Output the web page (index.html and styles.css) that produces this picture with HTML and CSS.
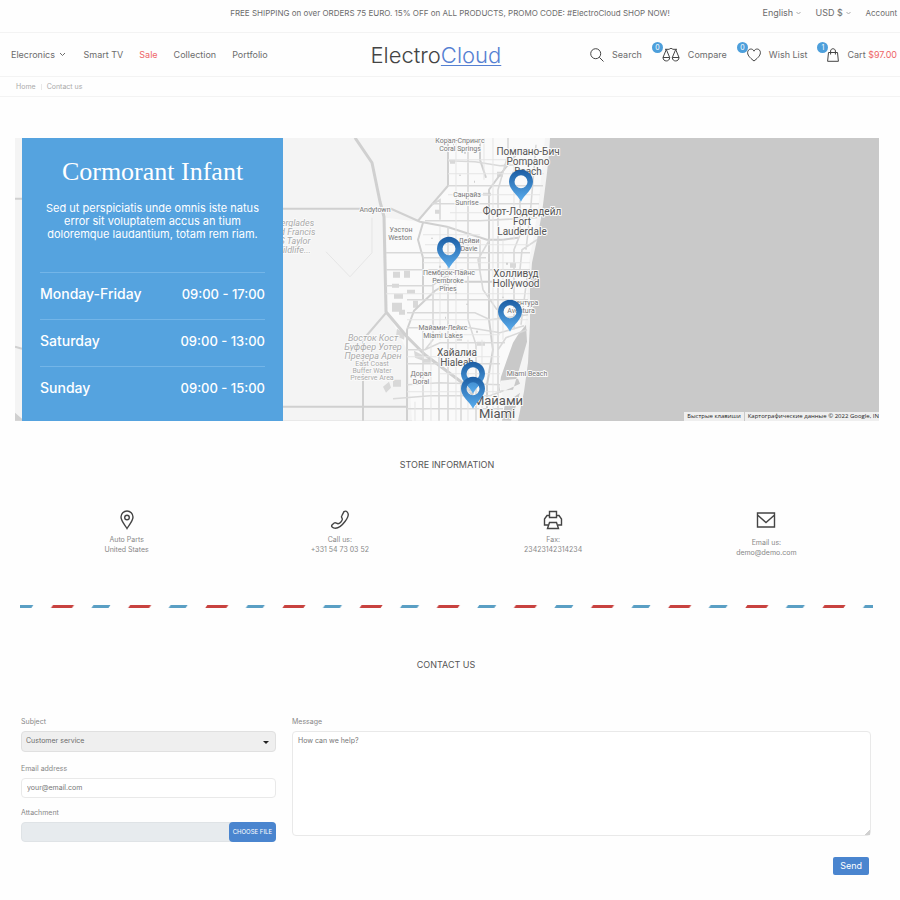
FILE: index.html
```html
<!DOCTYPE html>
<html lang="en">
<head>
<meta charset="utf-8">
<meta name="viewport" content="width=device-width, initial-scale=1">
<title>Contact us - ElectroCloud</title>
<link rel="stylesheet" href="styles.css">
</head>
<body>
<div class="topbar">
  <p class="promo">FREE SHIPPING on over ORDERS 75 EURO. 15% OFF on ALL PRODUCTS, PROMO CODE: #ElectroCloud SHOP NOW!</p>
  <div class="prefs">
    <span class="pref"><select aria-label="Language"><option>English</option></select><svg width="5" height="4" viewBox="0 0 5 4"><path d="M.5 1l2 2 2-2"/></svg></span>
    <span class="pref"><select aria-label="Currency"><option>USD $</option></select><svg width="5" height="4" viewBox="0 0 5 4"><path d="M.5 1l2 2 2-2"/></svg></span>
    <a class="account" href="#">Account</a>
  </div>
</div>

<header class="header">
  <nav class="nav">
    <a href="#">Elecronics <svg width="7" height="5" viewBox="0 0 7 5"><path d="M1 1l2.500 2.500L6 1"/></svg></a>
    <a href="#">Smart TV</a>
    <a class="sale" href="#">Sale</a>
    <a href="#">Collection</a>
    <a href="#">Portfolio</a>
  </nav>
  <a class="logo" href="#">Electro<span>Cloud</span></a>
  <div class="tools">
    <a class="tool" href="#"><span class="icon"><svg width="14" height="14" viewBox="0 0 14 14"><circle cx="5.700" cy="5.700" r="5"/><path d="M9.300 9.300L13.500 13.500"/></svg></span>Search</a>
    <a class="tool" href="#"><span class="icon"><svg width="18" height="14" viewBox="0 0 18 14"><path d="M3 1.300h4.200C8 0 10 0 10.800 1.300H15M4.300 1.500L1 9.500h6.700zM13.700 1.500L10.300 9.500H17zM1 9.500c0 4.600 6.700 4.600 6.700 0M10.300 9.500c0 4.600 6.700 4.600 6.700 0"/></svg><b class="badge">0</b></span>Compare</a>
    <a class="tool" href="#"><span class="icon"><svg width="14" height="14" viewBox="0 0 14 14"><path d="M7 13C4.500 11 .6 8 .6 4.700.6.500 5.700-.2 7 3.200 8.300-.2 13.400.500 13.400 4.700 13.400 8 9.500 11 7 13z"/></svg><b class="badge">0</b></span>Wish List</a>
    <a class="tool" href="#"><span class="icon"><svg width="12" height="14" viewBox="0 0 12 14"><path d="M1.500 4.500h9L11.400 13.300H.6zM3.600 6.500V3c0-3 4.800-3 4.800 0v3.500"/></svg><b class="badge">1</b></span><span>Cart <span class="price">$97.00</span></span></a>
  </div>
</header>

<nav class="crumbs" aria-label="Breadcrumb"><a href="#">Home</a><i></i><a href="#">Contact us</a></nav>

<main>
<section class="stores">
  <svg class="map" viewBox="15 138 864 283" preserveAspectRatio="xMinYMid slice" role="img" aria-label="Store map">
    <defs>
      <linearGradient id="pinfill" x1="0" y1="0" x2="0" y2="1"><stop offset="0" stop-color="#1c5da3"/><stop offset="1" stop-color="#5baeee"/></linearGradient>
      <path id="pin" fill="url(#pinfill)" fill-rule="evenodd" d="M0 20C-3 13-12 8-12 0A12 12 0 0 1 12 0C12 8 3 13 0 20zM0-6.500a6.500 6.500 0 1 0 0 13a6.500 6.500 0 1 0 0-13z"/>
    </defs>
    <rect x="15" y="138" width="864" height="283" fill="#c9c9c9"/>
    <path fill="#f4f4f4" d="M15 138H550L549 155 547 173 542 213 537 240 532 263 530 290 530 323 528 363 524 392 518 421H15z"/>
    <path fill="#fafafa" d="M449 138H545L538 210 529 263 526 320 515 350 500 385 508 421H412L407 350 388 314 386 218 418 222 448 186z"/>
    <path fill="#c9c9c9" d="M526 325l-8 10-5 8-5 14-7 20-2 14 14-1 6-20 8-28zM500 381l18-2 2 5-20 9zM505 404l15-11-3 10-6 18h-9z"/>
    <g fill="#d8d8d8"><path d="M392 303h10v9h-10zM394 294h9v5h-9zM399 310h6v5h-6zM413 301h5v7h-5zM414 351l8 4 1 6-8-3zM423 359h8v4h-8zM383 387l6-5 2 6-5 5zM393 380h8v7h-8zM397 329l8 5-1 6-8-4zM393 272h7v6h-7zM404 271h6v7h-6zM392 284h7v4h-7zM407 290h8v4h-8zM450 160h5v4h-5zM483 193h8v3h-8zM457 337h5v4h-5zM497 172h6v5h-6zM435 210h5v4h-5zM510 263h6v5h-6zM477 342h8v4h-8z"/></g>
    <g fill="none" stroke="#d0d0d0" stroke-width="2" stroke-linejoin="round">
      <path stroke-width="3" d="M355 138L372 163 380 202 384 217 386 312 407 337 425 355 461 382 473 395"/>
      <path d="M283 209H391L420 222 447 227 487 240 503 240 518 238M283 407H407M15 199h7M15 347l7 2M363 421V340L387 312M407 421V330L414 311 435 291 450 282H527"/>
      <path d="M448 138V186L418 221M423 223L418 240 423 258V300M487 421V385L493 350 489 320V190L500 175 520 150M480 138V160L486 178"/>
    </g>
    <g fill="none" stroke="#d9d9d9" stroke-width="1.600">
      <path d="M448 161L475 162 500 166 546 163M448 186H543M432 204H539M425 221H480L537 218M448 227V421M468 138V320L476 345V421M432 205L440 200V220M508 138V155L498 190V421M520 200V235L514 250V330M386 253H530M386 270H530M386 286H432L450 274M423 258H486M407 300H528M407 313H475L490 320 528 315M407 328H470L500 333 524 326M407 350H425L440 343H505M407 364H500M407 385L440 383 500 385M393 399L430 396 490 396 503 391M407 409H503M439 355V421M461 385V421M433 282V340L425 350M423 330V421M490 239L478 260 483 290 497 310M480 240V270M537 240L522 250 520 270M527 330L506 338 498 350V400M528 270L521 325M536 145L531 205 526 250"/>
      <path stroke-width="1" stroke="#e5e5e5" d="M456 138V421M493 138V421M530 160H448M448 174H544M448 195H540M450 213H500M423 235H480M425 245H530M423 263H530M386 294H530M407 320H528M425 335H500M407 357H500M440 374H500M407 392H500M415 402V421M431 340V421M468 340V421M482 340V421M484 138V180M514 148V240M503 240V340M440 227V340M326 252L350 277 372 253V218"/>
    </g>
    <g fill="#d0d0d0"><path d="M15 413l7 6v2h-7zM453 144h1v2h-1zM464 152h2v2h-2zM459 175h2v1h-2zM474 181h1v2h-1zM431 238h2v1h-2zM439 266h2v2h-2zM455 292h2v2h-2zM466 304h2v1h-2zM445 317h1v2h-1zM476 331h2v2h-2zM506 263h2v2h-2zM502 297h2v1h-2zM512 172h2v2h-2zM529 178h1v2h-1zM526 149h2v1h-2z"/></g>
    <g class="places" text-anchor="middle">
      <text x="460" y="143">Корал-Спрингс</text><text x="460" y="151">Coral Springs</text>
      <text x="467" y="197">Санрайз</text><text x="467" y="205">Sunrise</text>
      <text x="375" y="212">Andytown</text>
      <text x="401" y="232">Уэстон</text><text x="400" y="240">Weston</text>
      <text x="469" y="243">Дейви</text><text x="469" y="251">Davie</text>
      <text x="449" y="275">Пемброк-Пайнс</text><text x="448" y="283">Pembroke</text><text x="448" y="291">Pines</text>
      <text x="523" y="305">Авентура</text><text x="521" y="313">Aventura</text>
      <text x="443" y="330">Майами-Лейкс</text><text x="443" y="338">Miami Lakes</text>
      <text x="421" y="376">Дорал</text><text x="421" y="384">Doral</text>
      <text x="527" y="376">Miami Beach</text>
      <g class="city">
        <text x="528" y="155">Помпано-Бич</text><text x="528" y="165">Pompano</text><text x="528" y="175">Beach</text>
        <text x="522" y="215">Форт-Лодердейл</text><text x="522" y="225">Fort</text><text x="522" y="235">Lauderdale</text>
        <text x="516" y="277">Холливуд</text><text x="516" y="287">Hollywood</text>
        <text x="457" y="356">Хайалиа</text><text x="457" y="366">Hialeah</text>
      </g>
      <g class="metro"><text x="498" y="405">Майами</text><text x="497" y="418">Miami</text></g>
      <g class="park">
        <text x="373" y="341">Восток Кост</text><text x="373" y="350">Буффер Уотер</text><text x="373" y="359">Презера Арен</text>
        <text x="293" y="226">Everglades</text><text x="293" y="235">and Francis</text><text x="295" y="244">S Taylor</text><text x="293" y="253">Wildlife...</text>
      </g>
      <g class="reserve"><text x="372" y="366">East Coast</text><text x="372" y="373">Buffer Water</text><text x="372" y="380">Preserve Area</text></g>
    </g>
    <use href="#pin" x="521" y="182"/>
    <use href="#pin" x="449" y="249"/>
    <use href="#pin" x="510" y="312"/>
    <use href="#pin" x="473" y="374"/>
    <use href="#pin" x="473" y="389"/>
  </svg>
  <div class="hours">
    <h2>Cormorant Infant</h2>
    <p>Sed ut perspiciatis unde omnis iste natus error sit voluptatem accus an tium doloremque laudantium, totam rem riam.</p>
    <table>
      <tr><th scope="row">Monday-Friday</th><td>09:00 - 17:00</td></tr>
      <tr><th scope="row">Saturday</th><td>09:00 - 13:00</td></tr>
      <tr><th scope="row">Sunday</th><td>09:00 - 15:00</td></tr>
    </table>
  </div>
  <div class="credits"><button type="button">Быстрые клавиши</button><span>Картографические данные © 2022 Google, IN</span></div>
</section>

<section class="info">
  <h3>STORE INFORMATION</h3>
  <ul>
    <li><svg width="20" height="20" viewBox="0 0 20 20"><path d="M10 18.500C8 15 4 11 4 7a6 6 0 0 1 12 0c0 4-4 8-6 11.500z"/><circle cx="10" cy="7.500" r="2.300"/></svg>Auto Parts<br>United States</li>
    <li><svg width="20" height="20" viewBox="0 0 20 20"><path d="M14 1.600c1.500-1 2.400-.5 3.300.5 1.800 2 1 5.200-2.300 9.400-3.800 5-8.500 7.500-11.500 6.400-1.800-.6-2.400-2-1.300-3.200l2-1.700c1.600-1 2.300.8 3.800.8 1.700-.2 4-2.700 4.300-4.400.2-1.400-1.400-2-.6-3.400z"/></svg>Call us:<br>+331 54 73 03 52</li>
    <li><svg width="20" height="20" viewBox="0 0 20 20"><path d="M6.500 7.500V1.500h7v6zM6.500 5.500H4L1.500 9v6H5M13.500 5.500H16L18.500 9v6H15M4.500 18.500L6.500 12.500h7l2 6z"/></svg>Fax:<br>23423142314234</li>
    <li class="mail"><svg width="20" height="20" viewBox="0 0 20 20"><path d="M1.500 3h17v14h-17zM1.500 5l8.500 7.500L18.500 5"/></svg>Email us:<br>demo@demo.com</li>
  </ul>
</section>

<svg class="airmail" aria-hidden="true">
  <defs><pattern id="dashes" width="77.15" height="3" patternUnits="userSpaceOnUse"><path fill="#c8423f" d="M33 0h21l-2 3H31z"/><path fill="#5a9fc4" d="M73.500 0h17l-2 3h-17zM-3.650 0h17l-2 3h-17z"/></pattern></defs>
  <rect width="100%" height="3" fill="url(#dashes)"/>
</svg>

<section class="contact">
  <h3>CONTACT US</h3>
  <form>
    <div class="fields">
      <label for="subject">Subject</label>
      <div class="select"><select id="subject"><option>Customer service</option></select></div>
      <label for="email">Email address</label>
      <input id="email" type="email" placeholder="your@email.com">
      <label for="attachment">Attachment</label>
      <div class="file"><input id="attachment" type="file"><span>CHOOSE FILE</span></div>
    </div>
    <div class="message">
      <label for="message">Message</label>
      <textarea id="message" placeholder="How can we help?"></textarea>
      <button class="send" type="submit">Send</button>
    </div>
  </form>
</section>
</main>
</body>
</html>
```
FILE: styles.css
```css
* { box-sizing: border-box; }
body { margin: 0; background: #fefefe; color: #6c6c6c; font: 9px/12px Inter, "Open Sans", sans-serif; }
a { color: inherit; text-decoration: none; }
h2, h3, p, ul { margin: 0; padding: 0; font-weight: 400; }
select, input, textarea, button { font: inherit; color: inherit; margin: 0; }
svg { flex: none; fill: none; stroke: currentColor; }

.topbar { display: grid; grid-template-columns: 1fr auto 1fr; align-items: center; padding: 7px 3px 13px; border-bottom: 1px solid #f3f3f3; }
.promo { grid-column: 2; font-size: 8px; }
.prefs { display: flex; justify-content: flex-end; align-items: center; gap: 14px; }
.pref { display: flex; align-items: center; gap: 3px; }
.pref select { appearance: none; border: 0; padding: 0; background: none; }
.pref svg { stroke: #aaa; }
.account { font-size: 8px; }

.header { display: flex; align-items: center; justify-content: space-between; padding: 0 3px 0 11px; min-height: 44px; border-bottom: 1px solid #f3f3f3; }
.nav { display: flex; gap: 16px; }
.nav a:first-child { margin-right: 2px; }
.nav svg { margin: 0 0 1px 1px; }
.sale, .price { color: #ee6567; }
.logo { margin-left: 14px; font-size: 22px; line-height: 24px; font-weight: 300; color: #444; }
.logo span { color: #5580d2; text-decoration: underline; text-decoration-thickness: 1px; text-underline-offset: 2px; }
.tools { display: flex; gap: 20px; }
.tool { display: flex; align-items: center; gap: 8px; white-space: nowrap; }
.icon { display: flex; position: relative; color: #444; }
.badge { position: absolute; top: -6px; left: -10px; width: 11px; height: 11px; border-radius: 50%; background: #4d9fdb; color: #fff; font-size: 7px; line-height: 11px; font-weight: 400; text-align: center; }

.crumbs { display: flex; align-items: center; gap: 5px; padding: 4px 16px 3px; border-bottom: 1px solid #f3f3f3; color: #aaa; font-size: 7px; }
.crumbs i { width: 1px; height: 6px; background: #e8e8e8; }

main { padding: 41px 21px 25px 15px; }
.stores { position: relative; overflow: hidden; padding-left: 7px; background: #c9c9c9; }
.map { position: absolute; inset: 0; width: 100%; height: 100%; stroke: none; }
.places { font: 7px Roboto, sans-serif; fill: #777; stroke: #fafafa; stroke-width: 2px; paint-order: stroke; stroke-linejoin: round; }
.city { font-size: 10px; fill: #555; }
.metro { font-size: 13px; fill: #555; }
.park { font-size: 9px; font-style: italic; fill: #aaa; }
.reserve { fill: #aaa; }
.hours { position: relative; width: 261px; padding: 19px 18px 7px; background: #55a3df; color: #fff; text-align: center; }
.hours h2 { font: 26px/30px "Liberation Serif", serif; }
.hours p { margin: 15px 0 31px; font-size: 11px; line-height: 13px; }
.hours table { width: 100%; border-collapse: collapse; font-size: 14px; line-height: 18px; }
.hours tr { border-top: 1px solid #73b5e8; }
.hours th, .hours td { height: 47px; padding: 0 0 4px; font-weight: 500; text-align: left; }
.hours td { font-size: 13px; text-align: right; }
.credits { position: absolute; right: 0; bottom: 0; display: flex; gap: 1px; color: #222; font: 6px/9px "Open Sans", sans-serif; white-space: nowrap; }
.credits button, .credits span { border: 0; padding: 0 3px; background: #efefef; }
.credits span { padding-right: 0; }

.info h3, .contact h3 { color: #555; font-size: 9px; line-height: 12px; text-align: center; }
.info { padding: 38px 0 47px; }
.info ul { display: grid; grid-template-columns: repeat(4, 1fr); margin: 39px 6px 0 5px; list-style: none; }
.info li { color: #888; font-size: 7px; line-height: 10px; text-align: center; }
.info svg { display: block; margin: 0 auto 5px; color: #444; stroke-width: 1.4; }
.info .mail svg { margin-bottom: 8px; }
.airmail { display: block; width: calc(100% - 11px); height: 3px; margin-left: 5px; stroke: none; }

.contact { padding: 51px 8px 0 6px; }
.contact form { display: grid; grid-template-columns: 255px 1fr; gap: 16px; margin-top: 46px; font-size: 7px; }
.contact label { display: block; color: #888; line-height: 10px; margin-bottom: 4px; }
.fields, .message { display: flex; flex-direction: column; }
.select, .file { position: relative; }
.select { margin-bottom: 12px; }
.select::after { content: ""; position: absolute; right: 7px; top: 10px; border: 3px solid transparent; border-top-color: #222; border-bottom: 0; pointer-events: none; }
.select select { display: block; appearance: none; width: 100%; height: 21px; padding: 0 4px; border: 1px solid #e0e0e0; border-radius: 4px; background: #efefef; }
#email { height: 20px; margin-bottom: 10px; padding: 0 5px; border: 1px solid #e9e9e9; border-radius: 4px; background: #fff; }
::placeholder { color: #777; opacity: 1; }
.file { display: flex; justify-content: flex-end; height: 20px; border: 1px solid #dfe3e6; border-radius: 4px; background: #e7ebee; }
.file input { position: absolute; inset: 0; width: 100%; opacity: 0; }
.file span { margin: -1px; padding: 0 4px; border-radius: 4px; background: #4a85cf; color: #fff; font-size: 6px; line-height: 20px; }
textarea { height: 105px; padding: 3px 5px; border: 1px solid #e9e9e9; border-radius: 4px; background: #fff; resize: vertical; line-height: 12px; }
textarea::-webkit-resizer { background: linear-gradient(135deg, transparent 80%, #d0d0d0 80%); }
.send { align-self: flex-end; margin: 21px 2px 0 0; padding: 3px 7px; border: 0; border-radius: 2px; background: #4a85cf; color: #fff; font-size: 9px; line-height: 12px; }
```
